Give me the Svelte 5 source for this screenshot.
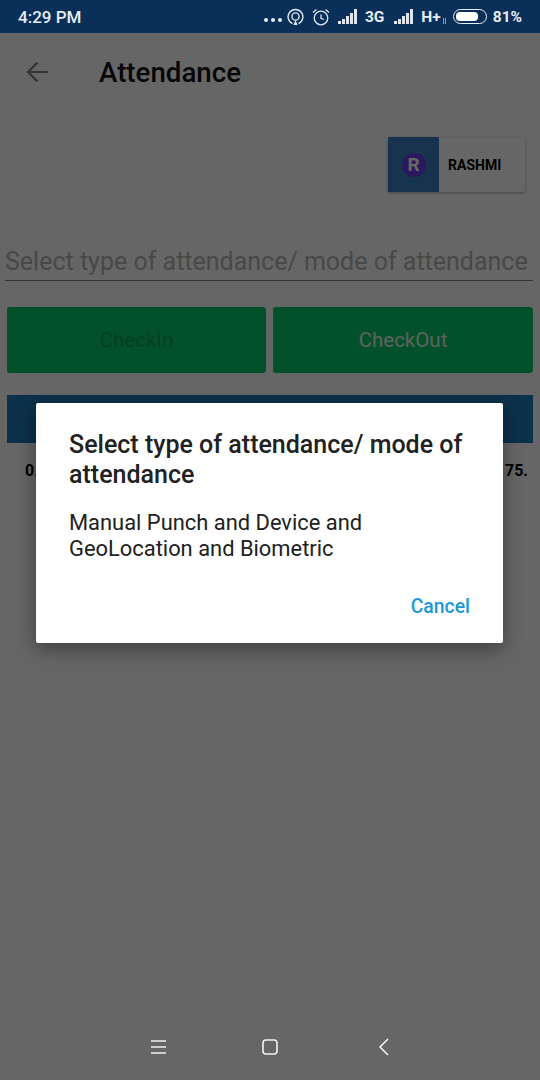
<script>
	let signals = [3, 5, 8, 11, 15];
</script>

<div class="screen">
	<header class="status">
		<span class="time">4:29 PM</span>
		<div class="status-right">
			<div class="dots"><i></i><i></i><i></i></div>
			<svg class="gps" width="17" height="18" viewBox="0 0 17 18" fill="none" stroke="#dfe6ee" stroke-width="1.4">
				<path d="M5.5 15.6a7.4 7.4 0 1 1 6 0" />
				<circle cx="8.5" cy="8.5" r="3.6" />
				<path d="M6.4 17l2.1-5 2.1 5z" fill="#dfe6ee" stroke="none" />
			</svg>
			<svg class="alarm" width="18" height="18" viewBox="0 0 18 18" fill="none" stroke="#dfe6ee" stroke-width="1.3">
				<circle cx="9" cy="10" r="6.8" />
				<path d="M9 6.5v3.8l2.8 1.2M1 4.5l3.4-3M17 4.5l-3.4-3" />
			</svg>
			<div class="signal">
				{#each signals as h}
					<i style="height: {h}px"></i>
				{/each}
			</div>
			<span class="net">3G</span>
			<div class="signal">
				{#each signals as h}
					<i style="height: {h}px"></i>
				{/each}
			</div>
			<span class="net hplus">H+</span>
			<div class="tiny"><i></i><i></i></div>
			<div class="battery"><div class="battery-fill"></div></div>
			<span class="net pct">81%</span>
		</div>
	</header>

	<main class="body">
		<div class="toolbar">
			<svg width="24" height="22" viewBox="0 0 24 22" fill="none" stroke="#808080" stroke-width="2.2">
				<path d="M23 11H3M12.5 1.5L3 11l9.5 9.5" />
			</svg>
			<h1>Attendance</h1>
		</div>

		<div class="user-row">
			<div class="user-card">
				<div class="user-thumb"><span class="avatar">R</span></div>
				<span class="user-name">RASHMI</span>
			</div>
		</div>

		<div class="select">Select type of attendance/ mode of attendance</div>

		<div class="actions">
			<button class="btn btn-in">CheckIn</button>
			<button class="btn btn-out">CheckOut</button>
		</div>

		<div class="band"></div>
		<div class="stats">
			<span>0.</span>
			<span>75.</span>
		</div>

		<div class="scrim">
			<div class="dialog" role="dialog">
				<h2>Select type of attendance/ mode of attendance</h2>
				<p>Manual Punch and Device and GeoLocation and Biometric</p>
				<div class="dialog-actions">
					<button class="cancel">Cancel</button>
				</div>
			</div>
		</div>

		<nav class="navbar">
			<svg class="menu" width="15" height="14" viewBox="0 0 15 14" stroke="#f2f2f2" stroke-width="1.6">
				<path d="M0 1h15M0 7h15M0 13h15" />
			</svg>
			<svg width="16" height="16" viewBox="0 0 16 16" fill="none" stroke="#f2f2f2" stroke-width="1.6">
				<rect x="1" y="1" width="14" height="14" rx="3" />
			</svg>
			<svg class="back" width="12" height="18" viewBox="0 0 12 18" fill="none" stroke="#f2f2f2" stroke-width="1.6">
				<path d="M10 1L2 9l8 8" />
			</svg>
		</nav>
	</main>
</div>

<style>
	:global(body) {
		margin: 0;
		background: #fff;
	}

	.screen {
		width: 540px;
		height: 1080px;
		display: flex;
		flex-direction: column;
		overflow: hidden;
		font-family: Roboto, "Liberation Sans", sans-serif;
	}

	.status {
		height: 33px;
		flex: none;
		background: #0a3059;
		color: #e8edf3;
		display: flex;
		align-items: center;
		justify-content: space-between;
		padding: 0 18px;
		box-sizing: border-box;
	}

	.time {
		font-size: 17px;
		font-weight: 500;
	}

	.status-right {
		display: flex;
		align-items: center;
	}

	.dots {
		display: flex;
		gap: 3px;
		margin: 6px 5px 0 0;
	}

	.dots i {
		display: block;
		width: 4px;
		height: 4px;
		border-radius: 50%;
		background: #e8edf3;
	}

	.gps {
		margin-right: 8px;
	}

	.alarm {
		margin-right: 8px;
	}

	.signal {
		display: flex;
		align-items: flex-end;
		gap: 1px;
		height: 15px;
		margin: 0 8px 0 0;
	}

	.signal i {
		display: block;
		width: 3px;
		background: #dfe6ee;
	}

	.net {
		font-size: 15.5px;
		font-weight: 700;
		margin-right: 10px;
	}

	.hplus {
		margin-right: 2px;
	}

	.tiny {
		display: flex;
		align-items: flex-end;
		gap: 1px;
		height: 6px;
		margin: 8px 7px 0 0;
	}

	.tiny i {
		display: block;
		width: 1px;
		height: 6px;
		background: #8ba0b8;
	}

	.battery {
		width: 34px;
		height: 15px;
		border: 1.5px solid #e8edf3;
		border-radius: 8px;
		padding: 2px;
		box-sizing: border-box;
		margin-right: 6px;
	}

	.battery-fill {
		width: 81%;
		height: 100%;
		background: #fff;
		border-radius: 4px;
	}

	.pct {
		margin-right: 0;
	}

	.body {
		flex: 1;
		position: relative;
		display: flex;
		flex-direction: column;
		background: #fff;
	}

	.toolbar {
		height: 78px;
		display: flex;
		align-items: center;
		padding-left: 25px;
		box-sizing: border-box;
	}

	.toolbar h1 {
		margin: 0 0 0 50px;
		font-size: 27.7px;
		font-weight: 500;
		color: #111;
	}

	.user-row {
		display: flex;
		justify-content: flex-end;
		padding: 26px 15px 0 0;
	}

	.user-card {
		width: 137px;
		height: 55px;
		display: flex;
		align-items: center;
		box-shadow: 0 1px 3px rgba(0, 0, 0, 0.35);
		background: #fff;
		border-radius: 2px;
	}

	.user-thumb {
		width: 51px;
		height: 100%;
		background: #3c80c0;
		display: flex;
		align-items: center;
		justify-content: center;
	}

	.avatar {
		width: 24px;
		height: 24px;
		border-radius: 50%;
		background: #6a3ae8;
		color: #fff;
		font-size: 19px;
		font-weight: 700;
		display: flex;
		align-items: center;
		justify-content: center;
	}

	.user-name {
		margin-left: 9px;
		font-size: 14px;
		font-weight: 700;
		color: #000;
	}

	.select {
		margin: 44px 7px 0 5px;
		padding: 0 0 4px;
		height: 45px;
		box-sizing: border-box;
		display: flex;
		align-items: flex-end;
		border-bottom: 1px solid #808080;
		font-size: 25px;
		color: #b4b4b4;
		white-space: nowrap;
	}

	.actions {
		display: grid;
		grid-template-columns: 259px 260px;
		gap: 7px;
		margin: 26px 7px 0;
	}

	.btn {
		height: 66px;
		border: none;
		border-radius: 3px;
		background: #08cb69;
		font: 400 20.5px Roboto, sans-serif;
		padding: 0;
	}

	.btn-in {
		color: #05a052;
	}

	.btn-out {
		color: #e6f5ec;
	}

	.band {
		height: 48px;
		margin: 22px 7px 0;
		background: #1f7cb8;
	}

	.stats {
		display: flex;
		justify-content: space-between;
		padding: 18px 12px 0 25px;
		font-size: 16px;
		font-weight: 700;
		color: #000;
	}

	.scrim {
		position: absolute;
		inset: 0;
		background: rgba(0, 0, 0, 0.6);
		display: flex;
		justify-content: center;
		align-items: flex-start;
	}

	.dialog {
		width: 467px;
		height: 240px;
		margin: 370px 1px 0 0;
		background: #fff;
		border-radius: 2px;
		box-shadow: 0 6px 20px rgba(0, 0, 0, 0.4);
		padding: 27px 33px 0;
		box-sizing: border-box;
		display: flex;
		flex-direction: column;
	}

	.dialog h2 {
		margin: 0;
		font-size: 25px;
		line-height: 30px;
		font-weight: 500;
		color: #212121;
	}

	.dialog p {
		margin: 20px 0 0;
		font-size: 21.9px;
		line-height: 26px;
		color: #212121;
	}

	.dialog-actions {
		display: flex;
		justify-content: flex-end;
		margin-top: 33px;
	}

	.cancel {
		border: none;
		background: none;
		padding: 0;
		font: 500 19.4px Roboto, sans-serif;
		color: #2196d8;
	}

	.navbar {
		position: absolute;
		left: 0;
		right: 0;
		bottom: 24px;
		display: grid;
		grid-template-columns: 112px 112px 112px;
		justify-content: center;
		justify-items: center;
		align-items: center;
	}

	.menu {
		margin-left: 1px;
	}

	.back {
		margin-left: 4px;
	}
</style>
